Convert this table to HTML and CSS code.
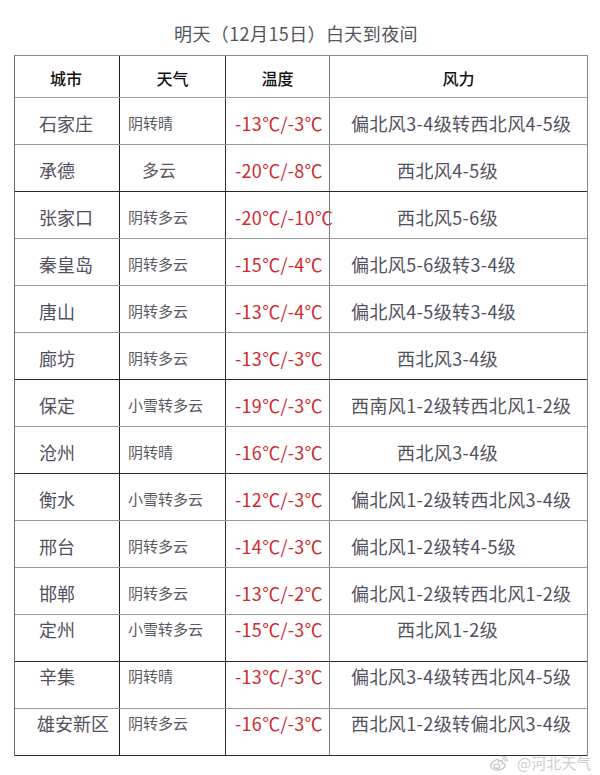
FILE: index.html
```html
<!DOCTYPE html>
<html lang="zh-CN">
<head>
<meta charset="utf-8">
<title>明天（12月15日）白天到夜间</title>
<link rel="stylesheet" href="styles.css">
</head>
<body>
<div class="page">
  <div class="title">明天（12月15日）白天到夜间</div>
  <div class="table">
    <div class="row head">
      <div class="c c1">城市</div>
      <div class="c c2 center">天气</div>
      <div class="c c3 center">温度</div>
      <div class="c c4 center">风力</div>
    </div>
    <div class="row">
      <div class="c c1 city">石家庄</div>
      <div class="c c2 wx">阴转晴</div>
      <div class="c c3 temp">-13℃/-3℃</div>
      <div class="c c4 wind">偏北风3-4级转西北风4-5级</div>
    </div>
    <div class="row dark">
      <div class="c c1 city">承德</div>
      <div class="c c2 wx wx-big">多云</div>
      <div class="c c3 temp">-20℃/-8℃</div>
      <div class="c c4 wind short">西北风4-5级</div>
    </div>
    <div class="row">
      <div class="c c1 city">张家口</div>
      <div class="c c2 wx">阴转多云</div>
      <div class="c c3 temp">-20℃/-10℃</div>
      <div class="c c4 wind short">西北风5-6级</div>
    </div>
    <div class="row">
      <div class="c c1 city">秦皇岛</div>
      <div class="c c2 wx">阴转多云</div>
      <div class="c c3 temp">-15℃/-4℃</div>
      <div class="c c4 wind">偏北风5-6级转3-4级</div>
    </div>
    <div class="row">
      <div class="c c1 city">唐山</div>
      <div class="c c2 wx">阴转多云</div>
      <div class="c c3 temp">-13℃/-4℃</div>
      <div class="c c4 wind">偏北风4-5级转3-4级</div>
    </div>
    <div class="row dark">
      <div class="c c1 city">廊坊</div>
      <div class="c c2 wx">阴转多云</div>
      <div class="c c3 temp">-13℃/-3℃</div>
      <div class="c c4 wind short">西北风3-4级</div>
    </div>
    <div class="row">
      <div class="c c1 city">保定</div>
      <div class="c c2 wx">小雪转多云</div>
      <div class="c c3 temp">-19℃/-3℃</div>
      <div class="c c4 wind">西南风1-2级转西北风1-2级</div>
    </div>
    <div class="row dark">
      <div class="c c1 city">沧州</div>
      <div class="c c2 wx">阴转晴</div>
      <div class="c c3 temp">-16℃/-3℃</div>
      <div class="c c4 wind short">西北风3-4级</div>
    </div>
    <div class="row">
      <div class="c c1 city">衡水</div>
      <div class="c c2 wx">小雪转多云</div>
      <div class="c c3 temp">-12℃/-3℃</div>
      <div class="c c4 wind">偏北风1-2级转西北风3-4级</div>
    </div>
    <div class="row">
      <div class="c c1 city">邢台</div>
      <div class="c c2 wx">阴转多云</div>
      <div class="c c3 temp">-14℃/-3℃</div>
      <div class="c c4 wind">偏北风1-2级转4-5级</div>
    </div>
    <div class="row">
      <div class="c c1 city">邯郸</div>
      <div class="c c2 wx">阴转多云</div>
      <div class="c c3 temp">-13℃/-2℃</div>
      <div class="c c4 wind">偏北风1-2级转西北风1-2级</div>
    </div>
    <div class="row dark top">
      <div class="c c1 city">定州</div>
      <div class="c c2 wx">小雪转多云</div>
      <div class="c c3 temp">-15℃/-3℃</div>
      <div class="c c4 wind short">西北风1-2级</div>
    </div>
    <div class="row top">
      <div class="c c1 city">辛集</div>
      <div class="c c2 wx">阴转晴</div>
      <div class="c c3 temp">-13℃/-3℃</div>
      <div class="c c4 wind">偏北风3-4级转西北风4-5级</div>
    </div>
    <div class="row dark top">
      <div class="c c1 city city-4">雄安新区</div>
      <div class="c c2 wx">阴转多云</div>
      <div class="c c3 temp">-16℃/-3℃</div>
      <div class="c c4 wind">西北风1-2级转偏北风3-4级</div>
    </div>
  </div>
  <div class="watermark">
    <svg class="wb" width="20" height="16" viewBox="0 0 20 16">
      <path d="M8 4.5 C4.5 5.5 1.5 8.5 1.8 11 C2.1 13.8 5.5 15.2 9 15 C13.5 14.7 16.5 12.3 16.2 10 C16 8.6 14.5 8.2 13.2 8.5 C14 6.8 13.4 5.6 11.8 5.7 C10.9 5.8 10 6.3 9.4 6.7 C9.8 5.2 9.3 4.2 8 4.5 Z" fill="none" stroke="#c4c4c4" stroke-width="1.3"/>
      <ellipse cx="7.8" cy="11.2" rx="3" ry="2.2" fill="none" stroke="#c4c4c4" stroke-width="1.1"/>
      <path d="M13.5 1.5 C16 1.3 18.5 3.5 18 6.3" fill="none" stroke="#c4c4c4" stroke-width="1.3" stroke-linecap="round"/>
      <path d="M13.8 3.8 C15 3.8 16 4.8 15.7 6" fill="none" stroke="#c4c4c4" stroke-width="1.1" stroke-linecap="round"/>
    </svg>
    <span class="wm-text">@河北天气</span>
  </div>
</div>
</body>
</html>
```

FILE: styles.css
```css
html, body {
  margin: 0;
  padding: 0;
  background: #ffffff;
}

.page {
  position: relative;
  width: 600px;
  height: 775px;
  font-family: "Noto Sans CJK SC", "Noto Sans", sans-serif;
  overflow: hidden;
}

.title {
  padding-top: 22px;
  height: 22px;
  line-height: 22px;
  margin-bottom: 11px;
  font-size: 18px;
  color: #55555c;
  text-align: center;
  padding-right: 8px;
  letter-spacing: 0.4px;
}

.table {
  margin-left: 14px;
  width: 574px;
  box-sizing: border-box;
  border-top: 1px solid #8a8a8a;
  border-left: 1px solid #6e6e6e;
  border-right: 1px solid #8a8a8a;
}

.row {
  display: grid;
  grid-template-columns: 104px 106px 104px 258px;
  height: 47px;
  box-sizing: border-box;
  border-bottom: 1px solid #9a9a9a;
}

.row.dark {
  border-bottom-color: #2a2a2a;
}

.row.head {
  height: 42px;
  border-bottom-color: #a0a0a0;
}

.c {
  display: flex;
  align-items: center;
  box-sizing: border-box;
  padding-top: 4px;
  white-space: nowrap;
  line-height: 22px;
}

.row.top .c {
  align-items: flex-start;
  padding-top: 3px;
}

.c2 {
  border-left: 1px solid #1e1e1e;
}

.c3 {
  border-left: 1px solid #2e2e2e;
}

.c4 {
  border-left: 1px solid #7a7a7a;
}

.head .c {
  font-size: 16px;
  font-weight: 500;
  color: #111111;
  padding-top: 3px;
}

.head .c1 {
  padding-left: 35px;
}

.center {
  justify-content: center;
}

.city {
  font-size: 18px;
  color: #515160;
  padding-left: 24px;
}

.city-4 {
  padding-left: 22px;
}

.wx {
  font-size: 15px;
  color: #5a5a63;
  padding-left: 8px;
}

.wx-big {
  font-size: 17px;
  padding-left: 22px;
}

.temp {
  font-size: 18px;
  color: #cf2a2e;
  padding-left: 9px;
  letter-spacing: 0.3px;
  overflow: visible;
}

.wind {
  font-size: 18px;
  color: #515160;
  padding-left: 21px;
  letter-spacing: 0.4px;
}

.wind.short {
  padding-left: 67px;
}

.watermark {
  position: absolute;
  left: 489px;
  top: 753px;
  display: flex;
  align-items: center;
  gap: 8px;
}

.wb {
  display: block;
}

.wm-text {
  font-size: 15px;
  line-height: 20px;
  color: #cdcdcd;
  text-shadow: 0 0 1px #ffffff;
}
```
